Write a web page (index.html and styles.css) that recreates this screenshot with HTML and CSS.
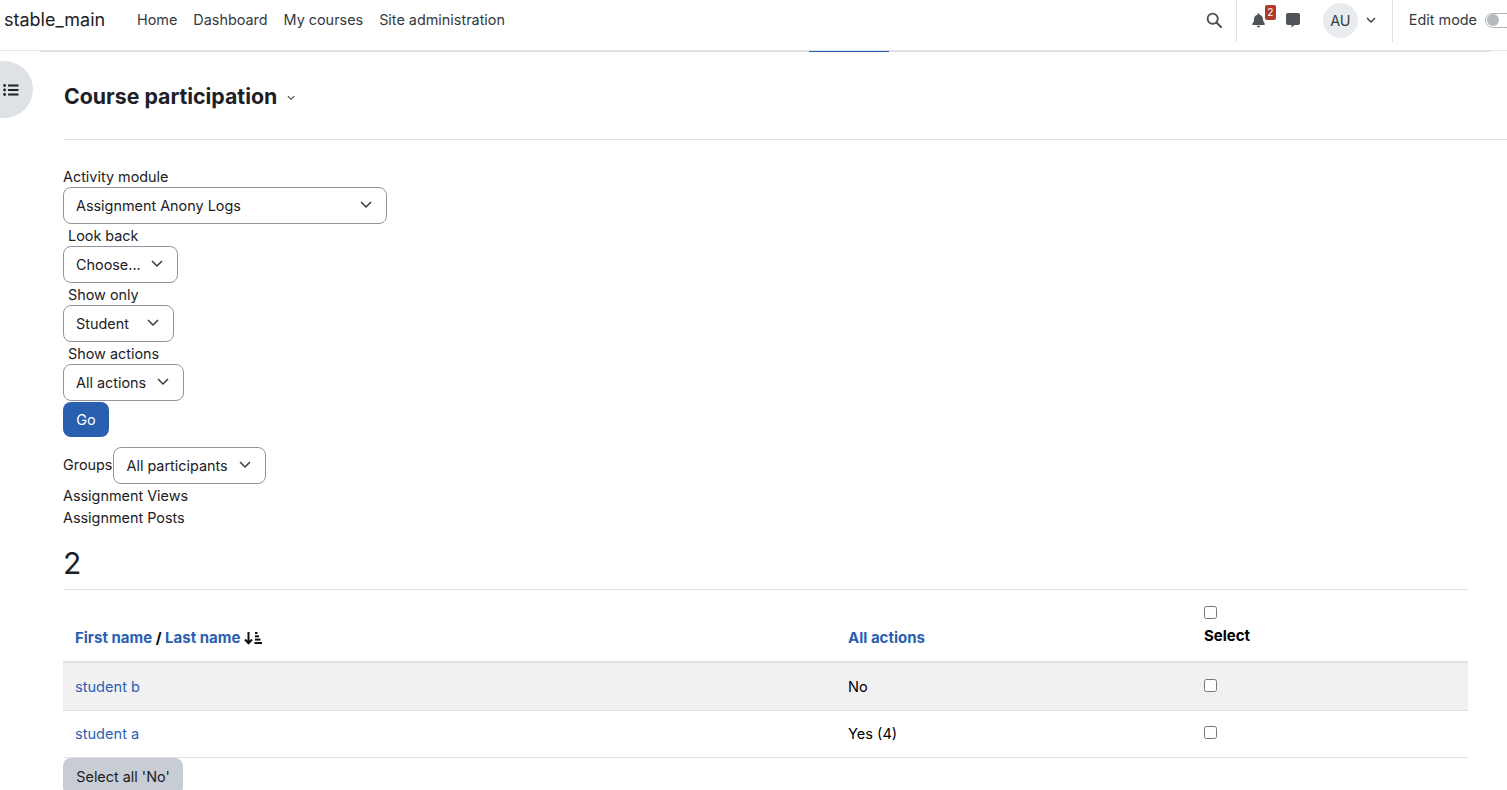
FILE: index.html
```html
<!DOCTYPE html>
<html lang="en">
<head>
<meta charset="utf-8">
<title>Course participation</title>
<link rel="stylesheet" href="styles.css">
</head>
<body>
<nav class="navbar">
  <a class="brand">stable_main</a>
  <ul class="primary">
    <li>Home</li>
    <li>Dashboard</li>
    <li>My courses</li>
    <li>Site administration</li>
  </ul>
  <div class="usernav">
    <svg class="icon-search" viewBox="0 0 16 16" width="16" height="16"><circle cx="6.700" cy="6.700" r="5.100" fill="none" stroke="#495057" stroke-width="1.900"/><path d="M10.500 10.500 15 15" stroke="#495057" stroke-width="2" stroke-linecap="round"/></svg>
    <span class="divider first"></span>
    <span class="bell">
      <svg viewBox="0 0 16 16" width="15" height="16"><path fill="#505458" d="M8 0.800c-.6 0-1 .5-1 1v.6C4.700 2.900 3.200 4.800 3.200 7c0 3.200-1 4.200-1.800 5.100-.4.500-.1 1.200.6 1.200h12c.7 0 1-.7.600-1.200C14.800 11.200 12.800 10.200 12.800 7c0-2.200-1.500-4.100-3.800-4.600v-.6c0-.5-.4-1-1-1zM6.300 14.200a1.700 1.700 0 0 0 3.400 0z"/></svg>
      <span class="badge">2</span>
    </span>
    <svg class="icon-msg" viewBox="0 0 16 16" width="16" height="16"><path fill="#505458" d="M3 1h10a2 2 0 0 1 2 2v8a2 2 0 0 1-2 2H9.500L6.500 15.500V13H3a2 2 0 0 1-2-2V3a2 2 0 0 1 2-2z"/></svg>
    <span class="avatar">AU</span>
    <svg class="icon-caret" viewBox="0 0 10 6" width="10" height="6"><path d="M1 1l4 4 4-4" fill="none" stroke="#343a40" stroke-width="1.300"/></svg>
    <span class="divider second"></span>
    <span class="editmode">Edit mode</span>
    <span class="switch"><span class="knob"></span></span>
  </div>
</nav>
<div class="nav-rule"><span class="nav-active"></span></div>
<button class="drawer-toggle" aria-label="Open index">
  <svg viewBox="0 0 16 14" width="16" height="14"><g fill="#1d2125"><circle cx="1.600" cy="2.500" r="1.400"/><circle cx="1.600" cy="7" r="1.400"/><circle cx="1.600" cy="11.500" r="1.400"/><rect x="5" y="1.500" width="10.500" height="2" rx=".5"/><rect x="5" y="6" width="10.500" height="2" rx=".5"/><rect x="5" y="10.500" width="10.500" height="2" rx=".5"/></g></svg>
</button>
<main class="content">
  <header class="page-head">
    <h2>Course participation</h2>
    <svg class="icon-head" viewBox="0 0 10 6" width="9" height="6"><path d="M1 1l3.500 3.500L8 1" fill="none" stroke="#343a40" stroke-width="1.200"/></svg>
  </header>
  <form class="filters">
    <label class="lbl">Activity module</label>
    <div class="sel w-activity"><span>Assignment Anony Logs</span><svg viewBox="0 0 12 8" width="12" height="8"><path d="M1 1l5 5 5-5" fill="none" stroke="#343a40" stroke-width="1.500"/></svg></div>
    <label class="lbl ind">Look back</label>
    <div class="sel w-choose"><span>Choose...</span><svg viewBox="0 0 12 8" width="12" height="8"><path d="M1 1l5 5 5-5" fill="none" stroke="#343a40" stroke-width="1.500"/></svg></div>
    <label class="lbl ind">Show only</label>
    <div class="sel w-student"><span>Student</span><svg viewBox="0 0 12 8" width="12" height="8"><path d="M1 1l5 5 5-5" fill="none" stroke="#343a40" stroke-width="1.500"/></svg></div>
    <label class="lbl ind">Show actions</label>
    <div class="sel w-actions"><span>All actions</span><svg viewBox="0 0 12 8" width="12" height="8"><path d="M1 1l5 5 5-5" fill="none" stroke="#343a40" stroke-width="1.500"/></svg></div>
    <button type="button" class="btn-go">Go</button>
  </form>
  <div class="groups">
    <span>Groups</span>
    <div class="sel w-groups"><span>All participants</span><svg viewBox="0 0 12 8" width="12" height="8"><path d="M1 1l5 5 5-5" fill="none" stroke="#343a40" stroke-width="1.500"/></svg></div>
  </div>
  <p class="stat">Assignment Views</p>
  <p class="stat">Assignment Posts</p>
  <h3 class="count">2</h3>
  <table class="parts">
    <colgroup><col class="c1"><col class="c2"><col class="c3"></colgroup>
    <thead>
      <tr>
        <th><a>First name</a> / <a>Last name</a> <svg class="icon-sort" viewBox="0 0 18 14" width="18" height="14"><path d="M4.500 1v11M1 8.500l3.500 3.700L8 8.500" fill="none" stroke="#111" stroke-width="2"/><g fill="#111"><rect x="11" y="1" width="2.500" height="2"/><rect x="11" y="4.300" width="4" height="2"/><rect x="11" y="7.600" width="5.500" height="2"/><rect x="10.500" y="11" width="7.500" height="2"/></g></svg></th>
        <th><a>All actions</a></th>
        <th class="sel-head"><input type="checkbox"><span>Select</span></th>
      </tr>
    </thead>
    <tbody>
      <tr class="odd"><td><a>student b</a></td><td>No</td><td><input type="checkbox"></td></tr>
      <tr><td><a>student a</a></td><td>Yes (4)</td><td><input type="checkbox"></td></tr>
    </tbody>
  </table>
  <button type="button" class="btn-all">Select all 'No'</button>
</main>
</body>
</html>
```
FILE: styles.css
```css
* { box-sizing: border-box; }
html, body { height: 100%; overflow: hidden; }
body { margin: 0; background: #fff; color: #1d2125; font: 14.400px/22.500px Inter, "Liberation Sans", sans-serif; }

.navbar { display: flex; align-items: center; height: 51px; padding: 0 0 10px 4px; border-bottom: 1px solid #e6e6ea; white-space: nowrap; }
.brand { font-size: 18px; margin-right: 24px; width: 109px; }
.primary { display: flex; list-style: none; margin: 0; padding: 0; gap: 16px; color: #343a40; }
.usernav { display: flex; align-items: center; margin-left: auto; height: 40px; }
.icon-search { margin-right: 14px; }
.divider { width: 1px; height: 42px; background: #dee2e6; align-self: flex-start; }
.divider.first { margin-right: 14px; }
.divider.second { margin: 0 16px 0 16px; }
.bell { position: relative; display: flex; margin-right: 19px; }
.badge { position: absolute; left: 14px; top: -7px; width: 11px; height: 15px; border-radius: 2px; background: #b03a2e; color: #fff; font-size: 10px; line-height: 15px; text-align: center; }
.icon-msg { margin-right: 22px; }
.avatar { width: 35px; height: 35px; border-radius: 50%; background: #e9ecef; text-align: center; line-height: 35px; color: #343a40; margin-right: 8px; }
.editmode { color: #343a40; margin-right: 8px; }
.switch { width: 30px; height: 15px; margin-right: -8px; border: 1px solid #adb5bd; border-radius: 8px; padding: 0 1px; display: flex; align-items: center; }
.knob { display: block; width: 12px; height: 12px; border-radius: 50%; background: #b5b9bd; }

.nav-rule { position: relative; height: 2px; margin: -1px 16px 0 40px; background: #dee2e6; }
.nav-active { position: absolute; left: 769px; bottom: 0; width: 80px; height: 1px; background: #2a5fb0; }
.drawer-toggle { position: absolute; left: -25px; top: 61px; width: 58px; height: 57px; border: 0; border-radius: 50%; background: #dee2e6; padding: 0 0 0 13px; display: flex; align-items: center; justify-content: center; }

.content { padding-left: 63px; }
.page-head { display: flex; align-items: center; height: 88px; border-bottom: 1px solid #dee2e6; padding-left: 1px; }
.page-head h2 { margin: 0; font-size: 21.300px; font-weight: 700; line-height: 28px; }
.icon-head { margin: 5px 0 0 10px; }

.filters { padding-top: 24.500px; display: flex; flex-direction: column; align-items: flex-start; }
.lbl { display: block; height: 22.500px; line-height: 24px; }
.lbl.ind { padding-left: 5px; }
.sel { display: inline-flex; align-items: center; justify-content: space-between; height: 36.500px; padding: 0 14px 0 12px; border: 1px solid #8f959e; border-radius: 8px; background: #fff; }
.sel span { position: relative; top: .5px; }
.sel svg { flex: none; }
.w-activity { width: 324px; }
.w-choose { width: 115px; }
.w-student { width: 111px; }
.w-actions { width: 121px; }
.w-groups { width: 153px; margin-left: 1px; }
.btn-go { height: 35.500px; width: 46px; border: 0; border-radius: 8px; background: #2a5fb0; color: #fff; font: inherit; margin-top: 1px; padding: 1px 0 0; }
.groups { display: flex; align-items: center; margin: 10px 0 1px; }
.stat { margin: 0; }
.count { margin: 15px 0 8px; font-size: 30px; font-weight: 400; line-height: 36px; }

.parts { width: 1405px; border-collapse: collapse; table-layout: fixed; font-size: 14.600px; color: #000; }
.c1 { width: 773px; }
.c2 { width: 356px; }
.parts th { text-align: left; vertical-align: bottom; padding: 16px 12px 12px; font-size: 15px; font-weight: 700; border-top: 1px solid #dee2e6; border-bottom: 2px solid #dee2e6; }
.parts td { padding: 12.500px 12px 11.500px; border-bottom: 1px solid #dee2e6; height: 47px; }
.parts a { color: #2a5fb0; }
.odd td { background: #f1f1f2; }
.parts input { width: 13px; height: 13px; margin: 0; display: block; }
.parts td input { margin-bottom: 3px; }
.sel-head input { margin-bottom: 6px; }
.sel-head span { display: block; margin-bottom: 2px; }
.icon-sort { vertical-align: -2px; }
.btn-all { display: block; height: 37px; width: 120px; border: 0; border-radius: 8px; background: #c8cdd3; color: #1d2125; font: inherit; padding: 1px 0 0; }
```
